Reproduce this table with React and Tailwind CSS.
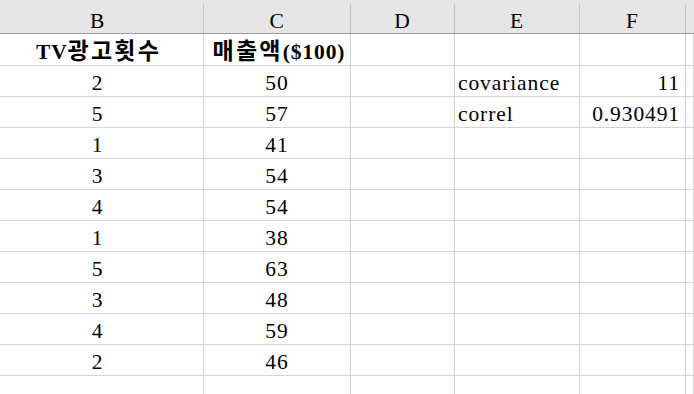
import React from "react";

const B = [2, 5, 1, 3, 4, 1, 5, 3, 4, 2];
const C = [50, 57, 41, 54, 54, 38, 63, 48, 59, 46];
const cols = ["B", "C", "D", "E", "F", ""];
const widths = ["w-[204px]", "w-[147px]", "w-[104px]", "w-[125px]", "w-[106px]", "flex-1"];

function Cell({ w, children, align = "center", bold = false, h = "h-[31px]" }) {
  const al =
    align === "center" ? "justify-center" : align === "right" ? "justify-end pr-[5px]" : "justify-start pl-[3px]";
  return (
    <div
      className={`${w} ${h} shrink-0 flex items-end ${al} border-r border-b border-[#d4d4d4] pb-[1px] ${
        bold ? "font-bold" : ""
      }`}
    >
      {children}
    </div>
  );
}

function Ko({ children }) {
  return <span className="text-[23px] tracking-[2.2px]">{children}</span>;
}

export default function App() {
  const rows = [];
  rows.push(
    <div key="t" className="flex">
      <Cell w={widths[0]} bold h="h-[32px]">
        <span className="pr-[6px]">
          TV<Ko>광고횟수</Ko>
        </span>
      </Cell>
      <Cell w={widths[1]} bold h="h-[32px]">
        <span className="pl-[4px]">
          <Ko>매출액</Ko>($100)
        </span>
      </Cell>
      <Cell w={widths[2]} h="h-[32px]" />
      <Cell w={widths[3]} h="h-[32px]" />
      <Cell w={widths[4]} h="h-[32px]" />
      <Cell w={widths[5]} h="h-[32px]" />
    </div>
  );
  for (let i = 0; i < 11; i++) {
    const e = i === 0 ? "covariance" : i === 1 ? "correl" : "";
    const f = i === 0 ? "11" : i === 1 ? "0.930491" : "";
    rows.push(
      <div key={i} className="flex">
        <Cell w={widths[0]}>
          <span className="pr-[8px]">{i < 10 ? B[i] : ""}</span>
        </Cell>
        <Cell w={widths[1]}>{i < 10 ? C[i] : ""}</Cell>
        <Cell w={widths[2]} />
        <Cell w={widths[3]} align="left">
          {e}
        </Cell>
        <Cell w={widths[4]} align="right">
          {f}
        </Cell>
        <Cell w={widths[5]} />
      </div>
    );
  }
  return (
    <div className="w-[694px] h-[394px] overflow-hidden bg-white text-black text-[21.5px] leading-[24px] tracking-[0.9px] font-['Liberation_Serif','Noto_Sans_CJK_KR',serif]">
      <div className="flex h-[34px] bg-[#e6e6e6] border-b border-[#9b9b9b]">
        {cols.map((c, i) => (
          <div key={i} className={`${widths[i]} shrink-0 flex`}>
            <div className={`flex-1 flex items-end justify-center pb-0 ${i === 0 ? "pr-[8px]" : ""}`}>{c}</div>
            {i < 5 && <div className="w-px mt-[4px] bg-[#c4c4c4]" />}
          </div>
        ))}
      </div>
      {rows}
    </div>
  );
}
